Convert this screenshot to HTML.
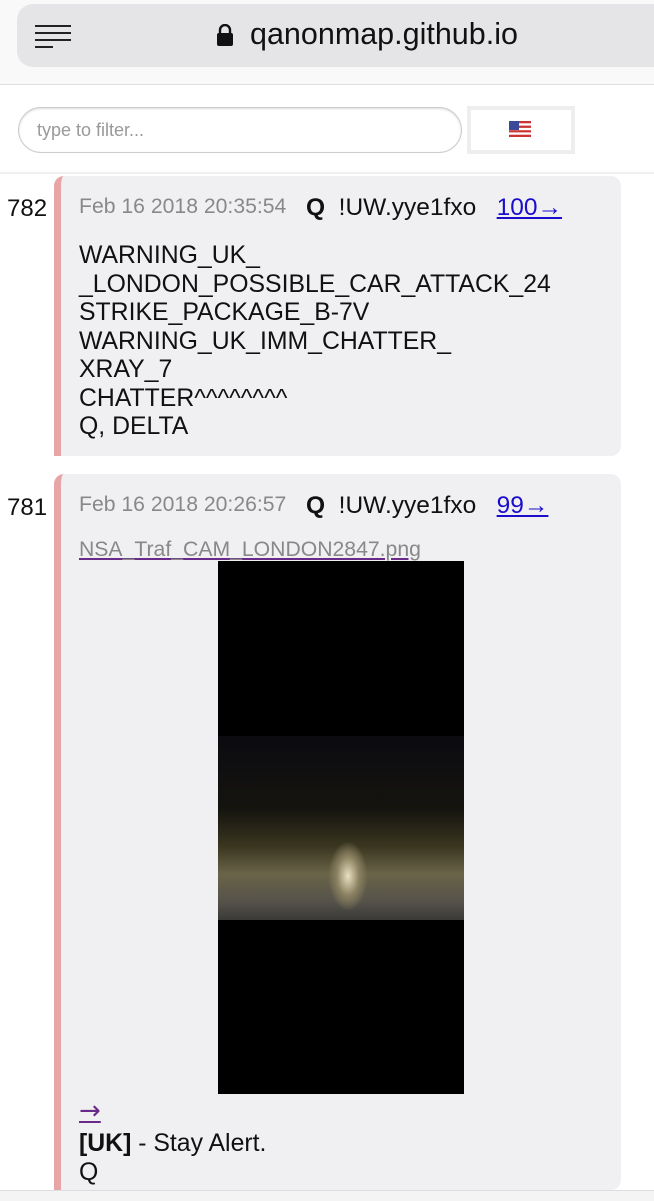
<!DOCTYPE html>
<html><head><meta charset="utf-8"><style>
body{margin:0;width:654px;height:1200px;overflow:hidden;background:#fff;font-family:"Liberation Sans",Arial,sans-serif;position:relative}
.top{position:absolute;left:0;top:0;width:654px;height:84px;background:#f9f9f9;border-bottom:1px solid #ddd}
.url{position:absolute;left:17px;top:4px;width:660px;height:63px;background:#e5e5e7;border-radius:16px}
.ham{position:absolute;left:35px;top:25px}
.ham div{height:2px;background:#222;margin-bottom:5px}
.dom{position:absolute;left:250px;top:17px;font-size:30.5px;color:#111}
.lock{position:absolute;left:216px;top:24px}
.filter{position:absolute;left:18px;top:107px;width:442px;height:44px;border:1px solid #ccc;border-radius:23px;box-shadow:inset 0 1px 2px #ddd}
.filter span{position:absolute;left:18px;top:12px;font-size:18px;color:#999}
.flag{position:absolute;left:467px;top:106px;width:100px;height:40px;border:4px solid #eee;background:#fff}
.hdr{position:absolute;left:0;top:172px;width:654px;height:2px;background:#f0f0f0}
.card{position:absolute;left:54px;width:560px;background:#f0f0f2;border-left:7px solid #e8a5a8;border-radius:10px 10px 10px 0}
.num{position:absolute;left:7px;font-size:24px;color:#111}
.meta{position:absolute;left:18px;font-size:21.2px;color:#888}
.q{position:absolute;font-size:24.5px;color:#111}
.body{position:absolute;left:18px;font-size:24.8px;line-height:28.5px;color:#111}
a{color:#1a0dcc}
</style></head><body>
<div class="top"><div class="url"></div>
<div class="ham"><div style="width:36px"></div><div style="width:36px"></div><div style="width:36px"></div><div style="width:18px"></div></div>
<svg class="lock" width="18" height="22" viewBox="0 0 18 22"><path d="M4 10V6a5 5 0 0 1 10 0v4" fill="none" stroke="#111" stroke-width="2.4"/><rect x="1" y="9" width="16" height="13" rx="2" fill="#111"/></svg>
<div class="dom">qanonmap.github.io</div></div>
<div class="filter"><span>type to filter...</span></div>
<div class="flag"><svg style="position:absolute;left:38px;top:11px" width="22" height="16" viewBox="0 0 22 16"><rect width="22" height="16" fill="#c33"/><rect y="2.3" width="22" height="2.3" fill="#fff"/><rect y="6.9" width="22" height="2.3" fill="#fff"/><rect y="11.4" width="22" height="2.3" fill="#fff"/><rect width="10" height="9" fill="#3a4a9a"/></svg></div>
<div class="hdr"></div>

<div class="num" style="top:195px">782</div>
<div class="card" style="top:176px;height:280px">
<div class="meta" style="top:19px">Feb 16 2018 20:35:54</div>
<div class="q" style="left:245px;top:18px"><b>Q</b>&nbsp;&nbsp;!UW.yye1fxo&nbsp;&nbsp;&nbsp;<a href="#">100→</a></div>
<div class="body" style="top:66px">WARNING_UK_<br>_LONDON_POSSIBLE_CAR_ATTACK_24<br>STRIKE_PACKAGE_B-7V<br>WARNING_UK_IMM_CHATTER_<br>XRAY_7<br>CHATTER^^^^^^^^<br>Q, DELTA</div>
</div>

<div class="num" style="top:494px">781</div>
<div class="card" style="top:474px;height:716px">
<div class="meta" style="top:19px">Feb 16 2018 20:26:57</div>
<div class="q" style="left:245px;top:18px"><b>Q</b>&nbsp;&nbsp;!UW.yye1fxo&nbsp;&nbsp;&nbsp;<a href="#">99→</a></div>
<div class="meta" style="top:64px;text-decoration:underline;text-decoration-color:#6a2a8a">NSA_Traf_CAM_LONDON2847.png</div>
<div style="position:absolute;left:157px;top:87px;width:246px;height:533px;background:#000">
<div style="position:absolute;left:0;top:175px;width:246px;height:184px;background:linear-gradient(180deg,#0b0b10 0%,#15140f 40%,#3a3620 60%,#6a6448 75%,#55524a 90%,#3a3a38 100%)"></div>
<div style="position:absolute;left:110px;top:280px;width:40px;height:70px;background:radial-gradient(ellipse,#e8e0c0 0%,#8a8060 40%,transparent 70%)"></div>
</div>
<div style="position:absolute;left:18px;top:622px;font-size:26px;font-family:'DejaVu Sans',sans-serif;color:#6a2a8a;text-decoration:underline">→</div>
<div class="body" style="top:656px"><b>[UK]</b> - Stay Alert.<br>Q</div>
</div>
<div style="position:absolute;left:0;top:1190px;width:654px;height:10px;background:#f4f4f4;border-top:1px solid #ddd;z-index:5"></div>
</body></html>
